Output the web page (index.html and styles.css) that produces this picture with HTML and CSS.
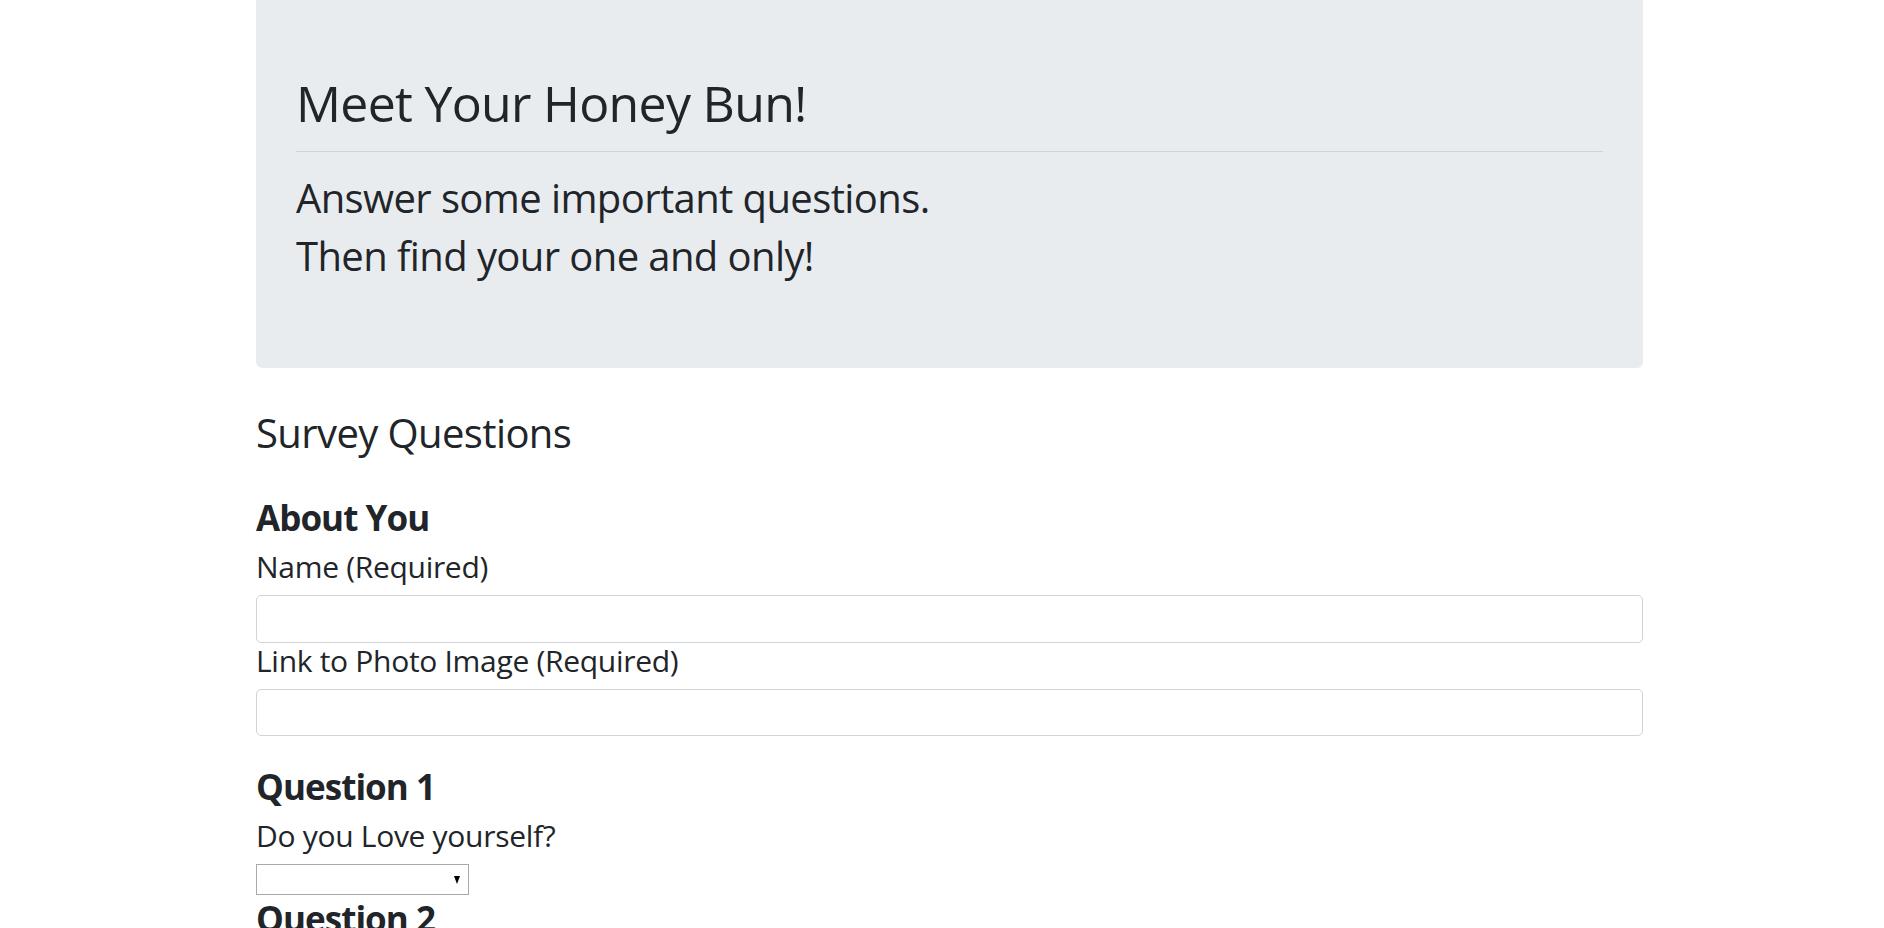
FILE: index.html
```html
<!DOCTYPE html>
<html lang="en">
<head>
<meta charset="utf-8">
<title>Meet Your Honey Bun!</title>
<link rel="stylesheet" href="styles.css">
</head>
<body>
<div class="container">
  <div class="jumbotron">
    <h1 class="title">Meet Your Honey Bun!</h1>
    <hr class="divider">
    <h2 class="lead-line">Answer some important questions.</h2>
    <h2 class="lead-line">Then find your one and only!</h2>
  </div>

  <h2 class="survey-title">Survey Questions</h2>

  <form class="survey">
    <section class="group">
      <h3 class="group-title">About You</h3>
      <h4 class="field-label">Name (Required)</h4>
      <input class="form-control" type="text">
      <h4 class="field-label">Link to Photo Image (Required)</h4>
      <input class="form-control" type="text">
    </section>

    <section class="group">
      <h3 class="group-title">Question 1</h3>
      <h4 class="field-label">Do you Love yourself?</h4>
      <div class="select-wrap">
        <select class="plain-select">
          <option value=""></option>
          <option value="1">1 (Strongly Disagree)</option>
          <option value="5">5 (Strongly Agree)</option>
        </select>
        <span class="select-arrow"></span>
      </div>
    </section>

    <section class="group group-tight">
      <h3 class="group-title">Question 2</h3>
      <h4 class="field-label">Do you love your neighbor?</h4>
    </section>
  </form>
</div>
</body>
</html>
```

FILE: styles.css
```css
* { box-sizing: border-box; }

html, body {
  margin: 0;
  padding: 0;
  background: #ffffff;
}

body {
  font-family: "Open Sans", "Noto Sans", "Liberation Sans", sans-serif;
  font-size: 20px;
  line-height: 1.5;
  color: #212529;
  overflow: hidden;
}

.container {
  width: 1387px;
  margin-left: 256px;
}

.jumbotron {
  background: #e9ecef;
  padding: 73px 40px 78px;
  margin-bottom: 41px;
  border-radius: 0 0 6px 6px;
}

h1, h2, h3, h4 {
  margin: 0;
  font-weight: 400;
}

.title {
  font-size: 50px;
  line-height: 60px;
  letter-spacing: -0.7px;
  margin-bottom: 0;
}

.divider {
  border: 0;
  border-top: 1px solid rgba(0, 0, 0, 0.1);
  margin: 18px 0 22px;
  height: 0;
}

.lead-line {
  font-size: 40px;
  line-height: 48px;
  letter-spacing: -0.6px;
  margin-bottom: 10px;
}

.survey-title {
  font-size: 40px;
  line-height: 48px;
  letter-spacing: -0.6px;
  margin-bottom: 10px;
}

.survey {
  margin: 0;
}

.group {
  padding-top: 30px;
}

.group-tight {
  padding-top: 3px;
}

.group-title {
  font-size: 35px;
  line-height: 42px;
  font-weight: 700;
  letter-spacing: -0.95px;
  margin-bottom: 10px;
}

.field-label {
  font-size: 30px;
  line-height: 36px;
  letter-spacing: -0.3px;
  margin-bottom: 10px;
}

.form-control {
  display: block;
  width: 100%;
  height: 47.5px;
  padding: 7.5px 15px;
  font: inherit;
  color: #495057;
  background: #fff;
  border: 1px solid #ced4da;
  border-radius: 5px;
  margin: 0;
}

.select-wrap {
  position: relative;
  width: 213px;
  height: 31px;
}

.plain-select {
  display: block;
  width: 213px;
  height: 31px;
  margin: 0;
  padding: 0 24px 0 4px;
  font: inherit;
  font-size: 20px;
  color: #000;
  background: #fff;
  border: 1px solid #a9a9a9;
  border-radius: 0;
  -webkit-appearance: none;
  appearance: none;
}

.select-arrow {
  position: absolute;
  right: 9px;
  top: 12px;
  width: 0;
  height: 0;
  border-left: 3.5px solid transparent;
  border-right: 3.5px solid transparent;
  border-top: 8px solid #000;
  pointer-events: none;
}
```
